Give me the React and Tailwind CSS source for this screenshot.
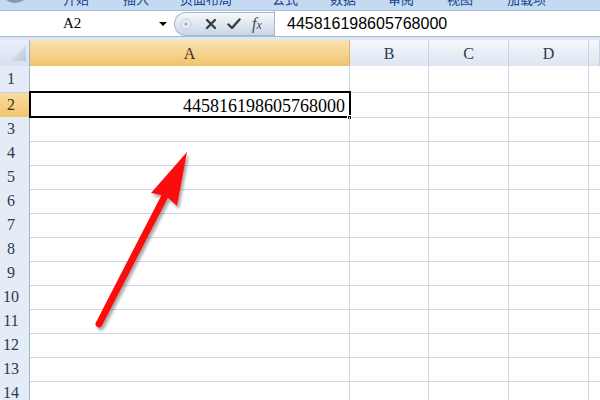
const TABS = [
  { label: '开始', ml: 'ml-[33px]' },
  { label: '插入', ml: 'ml-[34px]' },
  { label: '页面布局', ml: 'ml-[31px]' },
  { label: '公式', ml: 'ml-[40px]' },
  { label: '数据', ml: 'ml-[32px]' },
  { label: '审阅', ml: 'ml-[32px]' },
  { label: '视图', ml: 'ml-[33px]' },
  { label: '加载项', ml: 'ml-[34px]' },
];

const COLS = ['A', 'B', 'C', 'D', ''];
const ROWS = [1, 2, 3, 4, 5, 6, 7, 8, 9, 10, 11, 12, 13, 14];
const GRID = 'grid grid-cols-[30px_320px_79px_80px_80px_1fr]';
const serif = "font-['Liberation_Serif','DejaVu_Serif',serif]";

function RibbonStrip() {
  return (
    <div className="h-[10px] bg-[#c4d9f2] overflow-hidden flex items-start text-[13px] leading-[13px] text-[#15428b] font-['Noto_Sans_CJK_SC',sans-serif]">
      <div className="w-[30px] h-[30px] rounded-full bg-[#8a96a6] mt-[-27px] ml-[0px] shrink-0" />
      {TABS.map(t => (
        <span key={t.label} className={`${t.ml} mt-[-8px] shrink-0`}>{t.label}</span>
      ))}
    </div>
  );
}

function FormulaBar() {
  return (
    <div className="h-[26px] flex bg-white border-t border-[#a7bbd4]">
      {/* Name box */}
      <div className="w-[174px] flex items-center shrink-0">
        <span className={`${serif} text-[15px] text-black ml-[63px]`}>A2</span>
        <span className="ml-auto mr-[7px] w-0 h-0 border-l-[4px] border-r-[4px] border-t-[4px] border-l-transparent border-r-transparent border-t-black" />
      </div>
      {/* Buttons pill */}
      <div className="w-[100px] h-[24px] mt-[1px] rounded-l-full border border-r-0 border-[#a4b7cf] bg-gradient-to-b from-[#f6f9fc] to-[#c9d6e7] flex items-center shrink-0">
        <svg width="12" height="12" viewBox="0 0 12 12" className="ml-[5px]">
          <circle cx="6" cy="6" r="5" fill="#e6ecf3" stroke="#c3cedb" />
          <circle cx="6" cy="6" r="1.6" fill="#a3afbe" />
        </svg>
        <svg width="12" height="12" viewBox="0 0 12 12" className="ml-[13px]">
          <path d="M2 2 L10 10 M10 2 L2 10" stroke="#3c3c3c" strokeWidth="2.4" strokeLinecap="round" />
        </svg>
        <svg width="14" height="12" viewBox="0 0 14 12" className="ml-[10px]">
          <path d="M1.5 6.5 L5 10 L12.5 1.5" stroke="#3c3c3c" strokeWidth="2.4" fill="none" strokeLinecap="round" strokeLinejoin="round" />
        </svg>
        <span className={`${serif} italic text-[#4a4a4a] ml-[11px] leading-none`}>
          <span className="text-[16px]">f</span><span className="text-[12px]">x</span>
        </span>
      </div>
      {/* Formula input */}
      <div className="flex-1 border-l border-[#a4b7cf] flex items-center pl-[12px] font-['Liberation_Sans',Arial,sans-serif] text-[16px] text-black">
        445816198605768000
      </div>
    </div>
  );
}

function HeaderRow() {
  return (
    <div className={`${GRID} h-[25px] border-b border-[#9eb6ce]`}>
      <div className="relative bg-gradient-to-b from-[#e9eff8] to-[#d6e1f0] border-r border-[#9eb6ce]">
        <svg width="30" height="24" viewBox="0 0 30 24" className="absolute inset-0">
          <defs>
            <linearGradient id="cornerTri" x1="0" y1="0" x2="1" y2="1">
              <stop offset="0" stopColor="#f2f5f9" />
              <stop offset="1" stopColor="#b9c7d9" />
            </linearGradient>
          </defs>
          <polygon points="10,21 26,21 26,5" fill="url(#cornerTri)" />
        </svg>
      </div>
      {COLS.map(c => (
        <div
          key={c || 'e'}
          className={
            c === 'A'
              ? `${serif} text-[16px] text-[#3d2f14] flex items-center justify-center pt-[2px] bg-gradient-to-b from-[#fae3b2] to-[#f1c36a] border-r border-[#e3b45e]`
              : `${serif} text-[16px] text-[#2b3a4f] flex items-center justify-center pt-[2px] bg-gradient-to-b from-[#f5f8fc] to-[#dce5f1] border-r border-[#c5d3e4]`
          }
        >
          {c}
        </div>
      ))}
    </div>
  );
}

function SheetRow({ n }) {
  const active = n === 2;
  const h = n === 1 ? 'h-[28px]' : 'h-[24px]';
  return (
    <div className={`${GRID} ${h}`}>
      <div
        className={
          active
            ? `${serif} text-[16px] text-[#3d2f14] flex items-center justify-center pr-[7px] bg-gradient-to-b from-[#f9dc9f] to-[#f2c46b] border-r border-b border-[#d9a752]`
            : `${serif} text-[16px] text-[#2b3a4f] flex items-center justify-center pr-[7px] bg-[#e4ecf7] border-r border-[#9eb6ce] border-b border-b-[#c6d4e6]`
        }
      >
        {n}
      </div>
      <div className="relative border-r border-b border-[#d0d7e5] flex items-end justify-end pr-[4px]">
        {active && (
          <>
            <span className={`${serif} text-[18px] leading-[22px] text-black`}>445816198605768000</span>
            <div className="absolute -top-[2px] -left-[1px] -right-[2px] -bottom-[1px] border-2 border-black" />
            <div className="absolute -right-[3px] -bottom-[3px] w-[5px] h-[5px] bg-black border border-white" />
          </>
        )}
      </div>
      <div className="border-r border-b border-[#d0d7e5]" />
      <div className="border-r border-b border-[#d0d7e5]" />
      <div className="border-r border-b border-[#d0d7e5]" />
      <div className="border-b border-[#d0d7e5]" />
    </div>
  );
}

function RedArrow() {
  return (
    <svg width="600" height="400" viewBox="0 0 600 400" className="absolute inset-0 pointer-events-none">
      <defs>
        <filter id="arrowShadow" x="-20%" y="-20%" width="140%" height="140%">
          <feDropShadow dx="2" dy="3" stdDeviation="1.6" floodColor="#000" floodOpacity="0.35" />
        </filter>
      </defs>
      <g filter="url(#arrowShadow)">
        <line x1="99" y1="324" x2="168" y2="190" stroke="#fb0f0f" strokeWidth="7" strokeLinecap="round" />
        <polygon points="187,152 177,206 166,196 151,193" fill="#fb0f0f" />
      </g>
    </svg>
  );
}

export default function App() {
  return (
    <div className="w-[600px] h-[400px] overflow-hidden relative bg-white">
      <RibbonStrip />
      <FormulaBar />
      <div className="h-[4px] bg-[#dfe8f4] border-t border-[#a7bbd4]" />
      <HeaderRow />
      {ROWS.map(n => <SheetRow key={n} n={n} />)}
      <RedArrow />
    </div>
  );
}
